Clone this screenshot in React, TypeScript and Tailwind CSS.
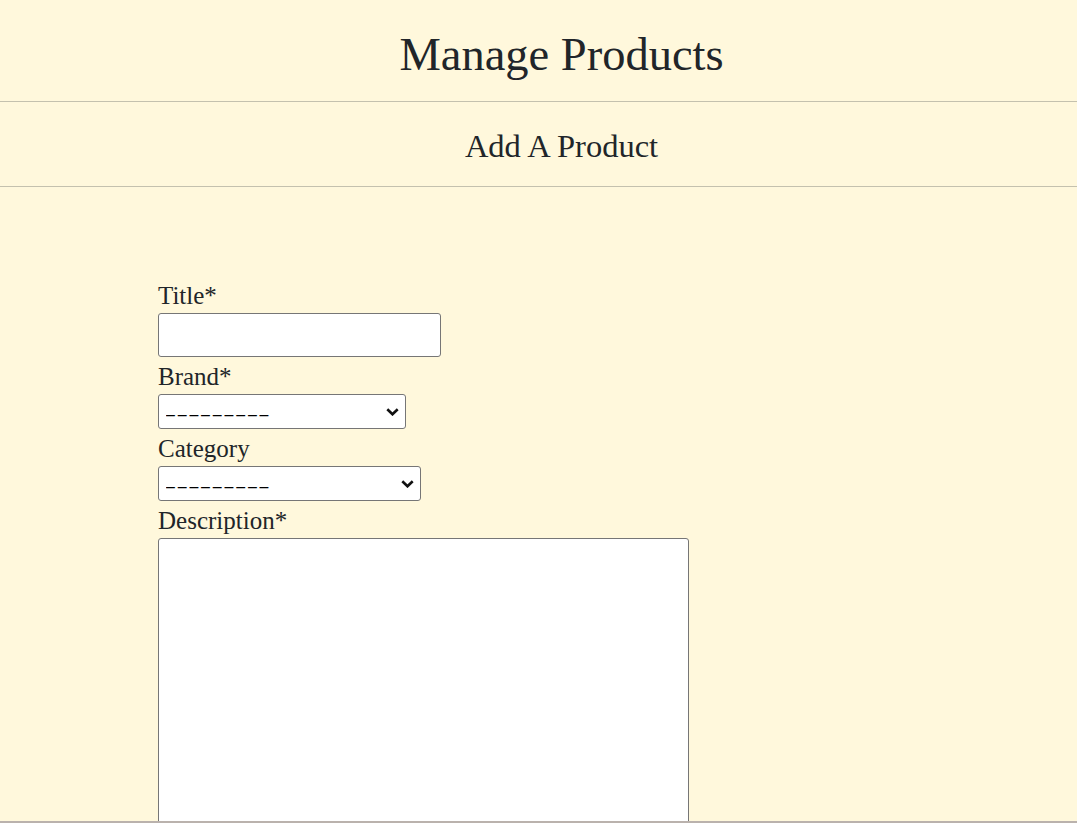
import React from 'react';

const serif = { fontFamily: '"Liberation Serif", "Times New Roman", serif' };

const Chevron = () => (
  <svg className="pointer-events-none absolute right-[7px] top-1/2 -translate-y-1/2" width="13" height="8" viewBox="0 0 13 8" fill="none">
    <path d="M1.3 1.3 L6.5 6.3 L11.7 1.3" stroke="#111" strokeWidth="2.6" />
  </svg>
);

const Select = ({ width }: { width: string }) => (
  <div className={`relative ${width}`}>
    <select className="block h-[35px] w-full appearance-none rounded-[3px] border border-[#767676] bg-white pl-[7px] pt-[7px] font-['Liberation_Sans',Arial,sans-serif] text-[16px] tracking-[2.8px] text-black">
      <option>–––––––––</option>
    </select>
    <Chevron />
  </div>
);

const Label = ({ children }: { children: React.ReactNode }) => (
  <label className="mt-[2px] block text-[25px] leading-[35px] text-[#212529]">{children}</label>
);

export default function App() {
  return (
    <div className="min-h-screen bg-[#fff8dc] text-[#212529]" style={serif}>
      <h1 className="pl-[46px] pt-[27px] text-center text-[46.5px] leading-[55px]">Manage Products</h1>
      <hr className="mt-[19px] border-t border-[#c4c1ae]" />
      <h2 className="mt-[25px] pl-[46px] text-center text-[32.5px] leading-[38px]">Add A Product</h2>
      <hr className="mt-[21px] border-t border-[#c4c1ae]" />

      <form className="ml-[158px] pt-[89px]">
        <Label>Title*</Label>
        <input type="text" className="block h-[44px] w-[283px] rounded-[3px] border border-[#767676] bg-white" />
        <Label>Brand*</Label>
        <Select width="w-[248px]" />
        <Label>Category</Label>
        <Select width="w-[263px]" />
        <Label>Description*</Label>
        <textarea className="block h-[320px] w-[531px] resize-none rounded-[3px] border border-[#767676] bg-white" />
      </form>

      <div className="fixed bottom-0 left-0 h-[2px] w-full bg-[#bab2ad]" />
    </div>
  );
}
